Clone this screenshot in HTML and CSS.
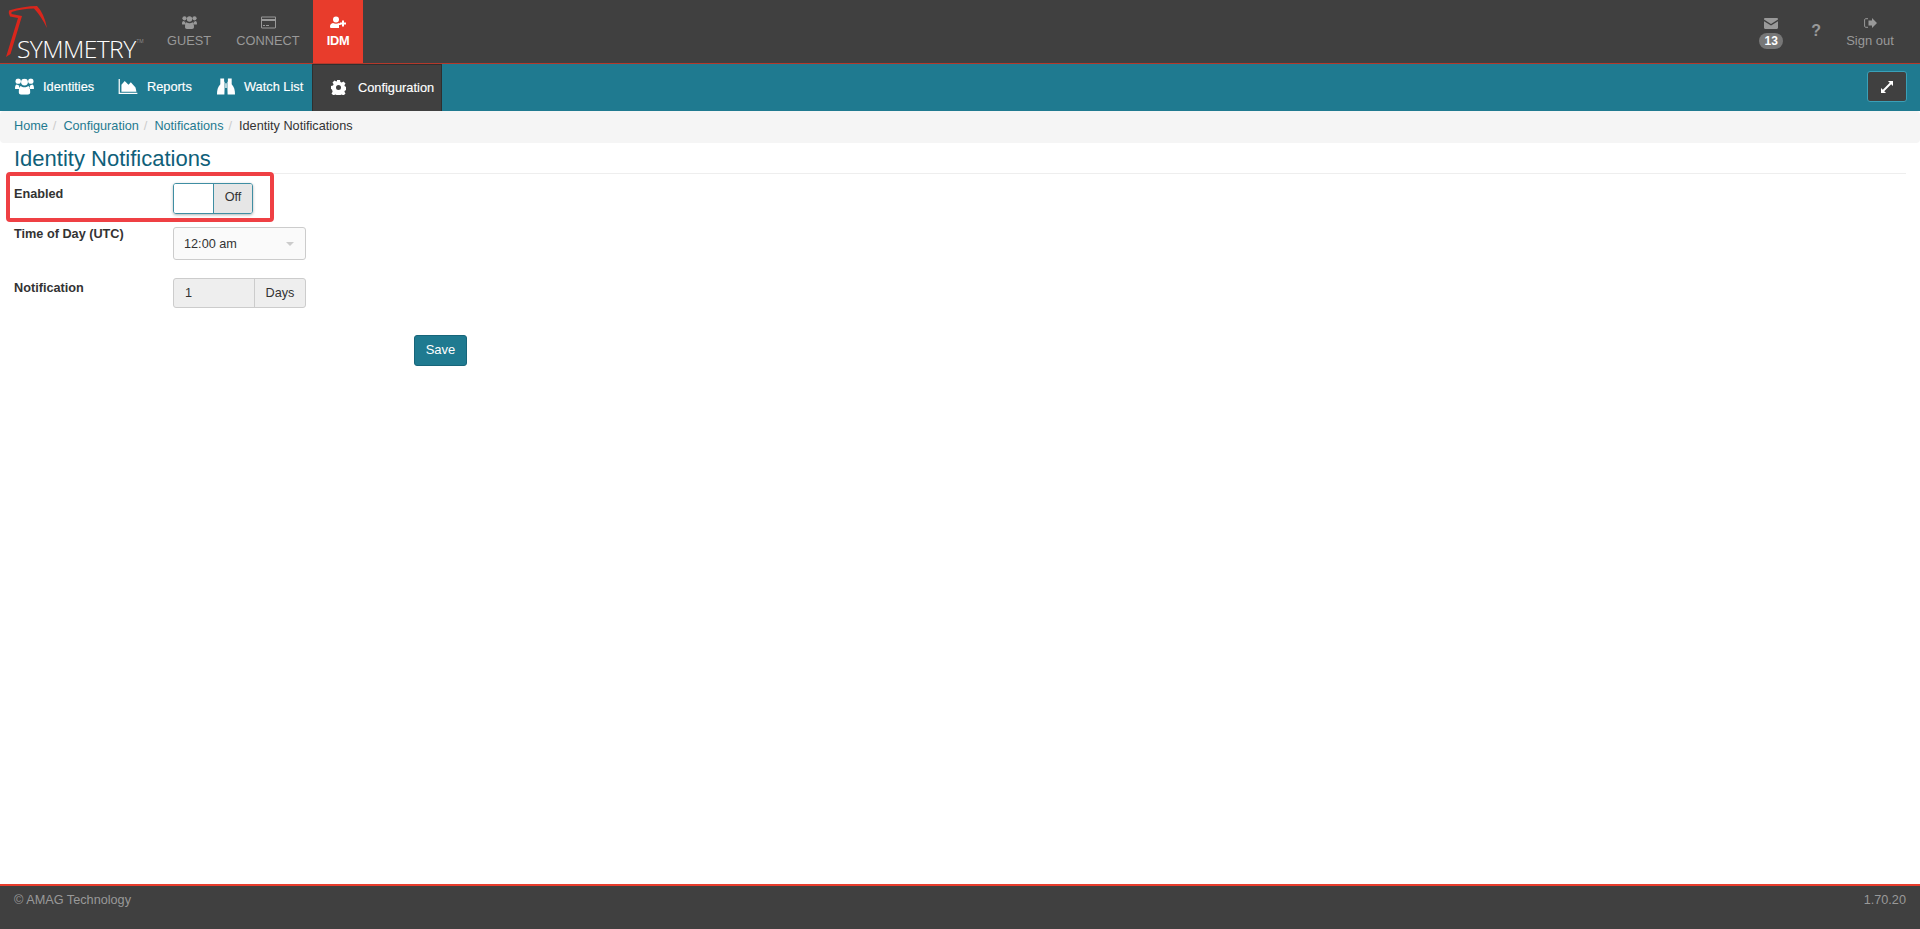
FILE: index.html
```html
<!DOCTYPE html>
<html lang="en">
<head>
    <meta charset="UTF-8">
    <title>Identity Notifications</title>
    <link rel="stylesheet" href="styles.css">
</head>
<body>
    <header class="topbar">
        <a class="logo" href="#">
            <svg class="logo-mark" width="60" height="60" viewBox="0 0 60 60">
                <path d="M6 57 L18 18 L10 16.500 Q8 13 9 10.500 Q24 6 37 6 Q44 13 47 28 Q41 16 34 8.500 Q22 8.500 11.500 12 L11.500 14 L22 16 L10.500 54 Z" fill="#d9261c"/>
            </svg>
            <span class="logo-text">SYMMETRY<sup>TM</sup></span>
        </a>
        <nav class="apps">
            <a class="app app-guest" href="#">
                <svg width="15" height="13" viewBox="0 0 15 13"><use href="#i-users"/></svg>
                <span>GUEST</span>
            </a>
            <a class="app app-connect" href="#">
                <svg width="15" height="12" viewBox="0 0 15 12"><path fill="currentColor" fill-rule="evenodd" d="M1.200 0h12.600C14.500 0 15 .5 15 1.200v9.600c0 .7-.5 1.200-1.200 1.200H1.200C.5 12 0 11.500 0 10.800V1.200C0 .5.500 0 1.200 0zM1 1v1.500h13V1zm0 3.500V11h13V4.500zM2 8.500h2v1H2zm3 0h3v1H5z"/></svg>
                <span>CONNECT</span>
            </a>
            <a class="app app-idm" href="#">
                <svg width="16" height="12" viewBox="0 0 16 12"><path fill="currentColor" d="M6 0a3 3 0 1 1 0 6 3 3 0 0 1 0-6zM3 6.500c1.800 1 4.200 1 6 0 1 .4 1.500 1 1.800 2H9v3H1.500C.5 11.500 0 11 0 10c0-1.800 1-3 3-3.500zM12 4h2v2h2v2h-2v2h-2V8h-2V6h2z"/></svg>
                <span>IDM</span>
            </a>
        </nav>
        <div class="top-right">
            <a class="top-link msg" href="#">
                <svg width="14" height="11" viewBox="0 0 14 11"><path fill="currentColor" d="M0 1.200C0 .5.500 0 1.200 0h11.600c.7 0 1.200.5 1.200 1.200v.4L7 6 0 1.600zM0 3.200 7 7.600l7-4.400v6.600c0 .7-.5 1.200-1.200 1.200H1.200C.5 11 0 10.500 0 9.800z"/></svg>
                <span class="badge">13</span>
            </a>
            <a class="top-link help" href="#">?</a>
            <a class="top-link signout" href="#">
                <svg width="13" height="11" viewBox="0 0 13 11"><path fill="currentColor" d="M8 2.500V0l5 5-5 5V7.500H4.500v-5z"/><path fill="none" stroke="currentColor" d="M4 .7H1.800C1 .7.600 1.200.6 1.800v6.400c0 .7.500 1.100 1.200 1.100H4"/></svg>
                <span>Sign out</span>
            </a>
        </div>
    </header>

    <nav class="subbar">
        <a class="sub-item" href="#">
            <svg width="19" height="17" viewBox="0 0 15 13"><use href="#i-users"/></svg>
            <span>Identities</span>
        </a>
        <a class="sub-item" href="#">
            <svg width="20" height="15" viewBox="0 0 20 16"><path fill="currentColor" d="M0 0h1.300v14.700H20V16H0zM3 13.500V6l3.500-4 4 4 2.500-2.500L18 9l1 4.500z"/></svg>
            <span>Reports</span>
        </a>
        <a class="sub-item" href="#">
            <svg width="18" height="17" viewBox="0 0 19 17"><path fill="currentColor" d="M3.500 0h4v3.500H8V10l-.2 7H0c0-5 .7-8 3.500-11zM11.500 0h4v6C18.300 9 19 12 19 17h-7.800L11 10V3.500h.5zM8.800 5h1.400v5H8.800z"/></svg>
            <span>Watch List</span>
        </a>
        <a class="sub-item active" href="#">
            <svg width="15" height="15" viewBox="0 0 15 15"><path fill="currentColor" fill-rule="evenodd" d="M6 0h3l.4 2 1.300.6 1.800-1.100 2 2-1.100 1.800.6 1.300 2 .4v3l-2 .4-.6 1.300 1.100 1.800-2 2-1.800-1.100-1.300.6-.4 2H6l-.4-2-1.300-.6-1.800 1.100-2-2 1.100-1.800L1 9.400 0 9V6l2-.4.600-1.300L1.500 2.500l2-2 1.800 1.100L6 1zM7.500 5a2.500 2.500 0 1 0 0 5 2.500 2.500 0 0 0 0-5z"/></svg>
            <span>Configuration</span>
        </a>
        <button class="expand" type="button">
            <svg width="12" height="12" viewBox="0 0 13 13"><path fill="currentColor" d="M7.500 0H13v5.500L11 3.500 3.500 11 5.500 13H0V7.500L2 9.500 9.500 2z"/></svg>
        </button>
    </nav>

    <ol class="breadcrumb">
        <li><a href="#">Home</a></li>
        <li><a href="#">Configuration</a></li>
        <li><a href="#">Notifications</a></li>
        <li class="current">Identity Notifications</li>
    </ol>

    <main class="content">
        <h1 class="page-title">Identity Notifications</h1>
        <form class="settings">
            <div class="row row-enabled">
                <label>Enabled</label>
                <div class="toggle">
                    <span class="toggle-blank"></span>
                    <span class="toggle-off">Off</span>
                </div>
            </div>
            <div class="row row-time">
                <label>Time of Day (UTC)</label>
                <div class="select">
                    <span>12:00 am</span>
                    <i class="caret"></i>
                </div>
            </div>
            <div class="row row-notify">
                <label>Notification</label>
                <div class="input-addon">
                    <span class="addon-value">1</span>
                    <span class="addon-unit">Days</span>
                </div>
            </div>
            <button class="save" type="button">Save</button>
            <div class="highlight"></div>
        </form>
    </main>

    <footer class="footer">
        <span>© AMAG Technology</span>
        <span>1.70.20</span>
    </footer>

    <svg class="defs" width="0" height="0">
        <symbol id="i-users" viewBox="0 0 15 13">
            <circle cx="2.500" cy="2.300" r="2.100" fill="currentColor"/>
            <circle cx="12.500" cy="2.300" r="2.100" fill="currentColor"/>
            <circle cx="7.500" cy="3" r="2.700" fill="currentColor"/>
            <path fill="currentColor" d="M0 8c0-2 .6-3 1.500-3 .5.500 1.200.7 1.800.6-.2 1-.1 2 .4 2.900H1C.4 8.500 0 8.500 0 8zM15 8c0-2-.6-3-1.500-3-.5.500-1.200.7-1.800.6.200 1 .1 2-.4 2.900H14c.6 0 1 0 1-.5zM4.500 6.200c1.600 1.300 4.400 1.300 6 0 1 .5 1.500 2 1.500 4.800 0 1-.7 2-2 2H5c-1.300 0-2-1-2-2 0-2.800.5-4.300 1.500-4.800z"/>
        </symbol>
    </svg>
</body>
</html>
```

FILE: styles.css
```css
* {
    box-sizing: border-box;
}
html, body {
    height: 100%;
}
body {
    margin: 0;
    display: flex;
    flex-direction: column;
    font-family: "Liberation Sans", Arial, sans-serif;
    font-size: 12.7px;
    color: #333;
    background: #fff;
}
a {
    color: inherit;
    text-decoration: none;
}
.defs {
    position: absolute;
}

/* top bar */
.topbar {
    height: 64px;
    flex: none;
    display: flex;
    background: #404040;
    border-bottom: 1px solid #b5392b;
}
.logo {
    width: 155px;
    position: relative;
    flex: none;
}
.logo-mark {
    position: absolute;
    left: 0;
    top: 0;
}
.logo-text {
    position: absolute;
    left: 17px;
    top: 34px;
    font-family: "Open Sans", sans-serif;
    font-size: 24.7px;
    line-height: 30px;
    font-weight: 300;
    letter-spacing: -0.6px;
    color: #fff;
    white-space: nowrap;
}
.logo-text sup {
    font-size: 5px;
    letter-spacing: 0;
    vertical-align: 15px;
    line-height: 0;
    color: #bbb;
    margin-left: 1px;
}
.apps {
    display: flex;
    height: 63px;
}
.app {
    display: flex;
    flex-direction: column;
    align-items: center;
    padding-top: 16px;
    gap: 4px;
    font-size: 12.8px;
    line-height: 16px;
    color: #999;
}
.app svg {
    height: 13px;
}
.app-guest {
    width: 68px;
}
.app-connect {
    width: 90px;
}
.app-idm {
    width: 50px;
    background: #e83c2c;
    color: #fff;
    font-weight: 700;
    letter-spacing: -0.3px;
}
.top-right {
    margin-left: auto;
    display: flex;
    align-items: flex-start;
    color: #999;
}
.top-link {
    display: flex;
    flex-direction: column;
    align-items: center;
}
.msg {
    padding-top: 18px;
    width: 24px;
    gap: 4px;
    margin-right: 28px;
}
.badge {
    width: 24px;
    height: 16px;
    line-height: 16px;
    border-radius: 8px;
    background: #777;
    color: #fff;
    font-size: 12px;
    font-weight: 700;
    text-align: center;
}
.help {
    font-size: 16px;
    font-weight: 700;
    line-height: 18px;
    padding-top: 22px;
    margin-right: 26px;
}
.signout {
    padding-top: 18px;
    width: 46px;
    margin-right: 27px;
    gap: 4px;
    font-size: 13px;
    line-height: 16px;
    white-space: nowrap;
}

/* teal nav */
.subbar {
    height: 47px;
    flex: none;
    display: flex;
    background: #1f7a90;
    color: #fff;
    font-size: 12.8px;
    -webkit-text-stroke: 0.15px #fff;
}
.sub-item {
    display: flex;
    align-items: center;
    gap: 9px;
    padding: 0 0 2px 15px;
}
.sub-item:nth-child(1) {
    width: 103px;
}
.sub-item:nth-child(2) {
    width: 99px;
}
.sub-item:nth-child(3) {
    width: 110px;
}
.sub-item.active {
    width: 130px;
    padding: 0 0 1px 18px;
    gap: 12px;
    background: #404040;
    border: 1px solid #2f2f2f;
    border-bottom: 0;
}
.expand {
    margin: 7px 13px 0 auto;
    width: 40px;
    height: 31px;
    background: #404040;
    border: 1px solid #3aa0b8;
    border-radius: 3px;
    color: #fff;
    padding: 0;
    display: flex;
    align-items: center;
    justify-content: center;
}

/* breadcrumb */
.breadcrumb {
    flex: none;
    margin: 0;
    height: 32px;
    padding: 0 14px 2px;
    list-style: none;
    display: flex;
    align-items: center;
    background: #f5f5f5;
    border-radius: 4px;
    color: #1f7a90;
}
.breadcrumb li + li::before {
    content: "/";
    color: #ccc;
    padding: 0 7px 0 5px;
}
.breadcrumb .current {
    color: #333;
}

/* content */
.content {
    flex: 1;
    padding: 0 14px;
}
.page-title {
    margin: 3px 0 0;
    height: 27px;
    font-size: 22px;
    line-height: 25px;
    font-weight: 400;
    color: #0f6079;
}
.settings {
    position: relative;
    border-top: 1px solid #eee;
}
.row {
    display: grid;
    grid-template-columns: 159px auto;
    justify-content: start;
}
.row label {
    font-weight: 700;
    line-height: 14px;
}
.row-enabled {
    padding-top: 9px;
}
.row-enabled label {
    padding-top: 4px;
}
.row-time {
    margin-top: 13px;
}
.row-notify {
    margin-top: 18px;
}
.row-notify label {
    padding-top: 3px;
}
.toggle {
    width: 80px;
    height: 31px;
    display: flex;
    border: 1px solid #3f8ea3;
    border-radius: 3px;
    overflow: hidden;
    box-shadow: 0 1px 3px rgba(0, 0, 0, 0.3);
}
.toggle-blank {
    width: 40px;
    background: #fff;
    border-right: 1px solid #3f8ea3;
}
.toggle-off {
    flex: 1;
    background: #e6e6e6;
    text-align: center;
    line-height: 27px;
}
.select {
    width: 133px;
    height: 33px;
    display: flex;
    align-items: center;
    justify-content: space-between;
    padding: 0 11px 0 10px;
    background: #fafafa;
    border: 1px solid #ccc;
    border-radius: 3px;
}
.caret {
    border-left: 4px solid transparent;
    border-right: 4px solid transparent;
    border-top: 4px solid #ccc;
}
.input-addon {
    width: 133px;
    height: 30px;
    display: flex;
    background: #eee;
    border: 1px solid #ccc;
    border-radius: 3px;
    line-height: 28px;
}
.addon-value {
    flex: 1;
    padding-left: 11px;
}
.addon-unit {
    width: 51px;
    text-align: center;
    border-left: 1px solid #ccc;
}
.save {
    display: block;
    margin: 27px 0 0 400px;
    width: 53px;
    height: 31px;
    padding: 0 0 2px;
    font-family: inherit;
    font-size: 13px;
    color: #fff;
    background: #1f7a90;
    border: 1px solid #17657a;
    border-radius: 3px;
}
.highlight {
    position: absolute;
    left: -8px;
    top: -2px;
    width: 268px;
    height: 50px;
    border: 4px solid #ef4044;
    border-radius: 4px;
}

/* footer */
.footer {
    flex: none;
    height: 45px;
    display: flex;
    justify-content: space-between;
    padding: 6px 14px 0;
    background: #404040;
    border-top: 2px solid #e83c2c;
    color: #999;
    line-height: 16px;
}
```
